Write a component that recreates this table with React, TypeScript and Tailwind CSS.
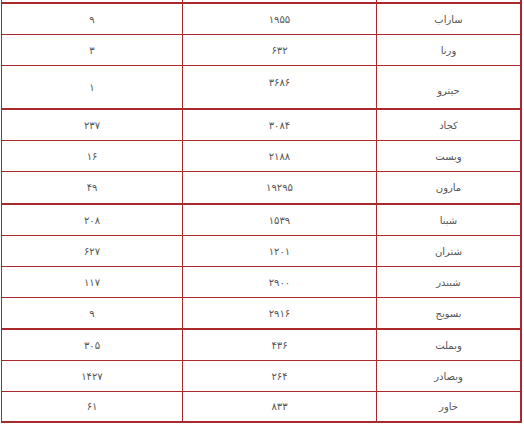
const rows: { name: string; total: string; count: string; h?: string; tall?: boolean }[][] = [
  [
    { name: 'ساراب', total: '۱۹۵۵', count: '۹' },
    { name: 'ورنا', total: '۶۳۲', count: '۳' },
    { name: 'حیترو', total: '۳۶۸۶', count: '۱', tall: true },
  ],
  [
    { name: 'کجاد', total: '۳۰۸۴', count: '۲۳۷' },
    { name: 'ویست', total: '۲۱۸۸', count: '۱۶' },
    { name: 'مارون', total: '۱۹۲۹۵', count: '۴۹', h: 'h-[31px]' },
  ],
  [
    { name: 'شبنا', total: '۱۵۳۹', count: '۲۰۸' },
    { name: 'شتران', total: '۱۲۰۱', count: '۶۲۷' },
    { name: 'شبندر', total: '۲۹۰۰', count: '۱۱۷' },
    { name: 'بسویج', total: '۲۹۱۶', count: '۹' },
  ],
  [
    { name: 'وبملت', total: '۴۳۶', count: '۳۰۵' },
    { name: 'وبصادر', total: '۲۶۴', count: '۱۴۲۷' },
    { name: 'خاور', total: '۸۳۳', count: '۶۱', h: 'h-[29px]' },
  ],
];

const cell = 'flex items-center justify-center';

export default function App() {
  return (
    <div className="min-h-[424px] bg-white font-['DejaVu_Sans',sans-serif] text-[10px] text-[#555]">
      <div className="ml-px w-[521px] border-l border-r-2 border-[#a9292d]">
        {/* tail of the row above */}
        <div className="grid h-[2px] grid-cols-[181px_194px_1fr]">
          <div className="border-r border-[#a9292d]" />
          <div className="border-r border-[#a9292d]" />
          <div />
        </div>
        {rows.map((group, gi) => (
          <div key={gi} className={`border-t-2 border-[#a9292d] ${gi === rows.length - 1 ? 'border-b-2' : ''}`}>
            {group.map((r, ri) => {
              const last = ri === group.length - 1;
              const height = !last ? 'h-[31px] border-b border-[#a9292d]' : r.tall ? 'h-[42px]' : r.h ?? 'h-[30px]';
              return (
                <div key={ri} className={`grid grid-cols-[181px_194px_1fr] ${height}`}>
                  <div className={`${cell} border-r border-[#a9292d]`}>{r.count}</div>
                  <div className={`${cell} border-r border-[#a9292d] ${r.tall ? 'pb-[10px]' : ''}`}>{r.total}</div>
                  <div className={`${cell} ${r.tall ? 'pt-[6px]' : ''}`} dir="rtl">
                    {r.name}
                  </div>
                </div>
              );
            })}
          </div>
        ))}
      </div>
    </div>
  );
}
